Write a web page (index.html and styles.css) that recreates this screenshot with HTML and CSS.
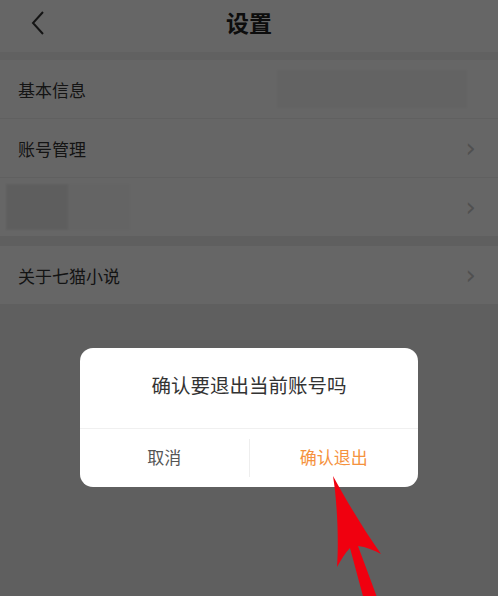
FILE: index.html
```html
<!DOCTYPE html>
<html lang="zh-CN">
<head>
    <meta charset="UTF-8">
    <meta name="viewport" content="width=device-width, initial-scale=1.0">
    <title>设置</title>
    <link rel="stylesheet" href="styles.css">
</head>
<body>
    <div class="page">
        <header class="topbar">
            <svg class="back" width="16" height="26" viewBox="0 0 16 26">
                <path d="M13 2 L3 13 L13 24" fill="none" stroke="#333" stroke-width="2"/>
            </svg>
            <h1 class="title">设置</h1>
        </header>

        <ul class="group">
            <li class="row">
                <span class="label">基本信息</span>
                <span class="blur-box wide"></span>
            </li>
            <li class="row">
                <span class="label">账号管理</span>
                <span class="arrow">&rsaquo;</span>
            </li>
            <li class="row">
                <span class="blur-box avatar"></span>
                <span class="arrow">&rsaquo;</span>
            </li>
        </ul>

        <ul class="group">
            <li class="row">
                <span class="label">关于七猫小说</span>
                <span class="arrow">&rsaquo;</span>
            </li>
        </ul>
    </div>

    <div class="mask">
        <div class="dialog">
            <p class="dialog-text">确认要退出当前账号吗</p>
            <div class="dialog-actions">
                <button class="btn cancel">取消</button>
                <button class="btn confirm">确认退出</button>
            </div>
        </div>
    </div>

    <!-- red pointer onto the confirm button -->
    <svg class="pointer" width="498" height="596" viewBox="0 0 498 596">
        <path d="M333 476 C337 500 339 540 337 567 C341 560 345 553 350 548 L364 600 L378 600 L358 546 C366 547 374 550 381 554 C364 530 346 500 333 476 Z" fill="#f0000f"/>
    </svg>
</body>
</html>
```

FILE: styles.css
```css
html, body {
    margin: 0;
    padding: 0;
}
body {
    width: 498px;
    height: 596px;
    overflow: hidden;
    position: relative;
    font-family: "Noto Sans CJK SC", "Noto Sans", sans-serif;
    background: #eeeeee;
}
ul {
    list-style: none;
    margin: 0;
    padding: 0;
}

.topbar {
    height: 52px;
    background: #fff;
    display: flex;
    align-items: center;
    justify-content: center;
    position: relative;
    border-bottom: 8px solid #f3f3f3;
}
.back {
    position: absolute;
    left: 30px;
    top: 10px;
}
.title {
    margin: 0 0 8px;
    font-size: 23px;
    font-weight: bold;
    color: #222;
}

.group {
    background: #fff;
    margin-bottom: 10px;
}
.row {
    height: 58px;
    display: flex;
    align-items: center;
    justify-content: space-between;
    padding: 0 18px;
    border-bottom: 1px solid #f1f1f1;
}
.row:last-child {
    border-bottom: none;
}
.label {
    font-size: 17px;
    color: #333;
}
.arrow {
    font-size: 26px;
    color: #c8c8c8;
    font-family: "DejaVu Sans", sans-serif;
    line-height: 1;
    margin-right: 4px;
}
.blur-box {
    display: block;
    background: #f7f7f7;
    filter: blur(1px);
}
.blur-box.wide {
    width: 190px;
    height: 38px;
    margin-right: 13px;
}
.blur-box.avatar {
    width: 62px;
    height: 46px;
    margin-left: -12px;
    background: #ececec;
    box-shadow: 62px 0 0 #fafafa;
}

.mask {
    position: absolute;
    inset: 0;
    background: rgba(0, 0, 0, 0.6);
}
.dialog {
    position: absolute;
    left: 80px;
    top: 348px;
    width: 338px;
    background: #fff;
    border-radius: 13px;
    overflow: hidden;
}
.dialog-text {
    margin: 0;
    height: 80px;
    line-height: 74px;
    text-align: center;
    font-size: 19.5px;
    color: #333;
    border-bottom: 1px solid #f0f0f0;
}
.dialog-actions {
    display: flex;
    height: 58px;
    align-items: center;
}
.btn {
    flex: 1;
    border: none;
    background: none;
    font-family: inherit;
    font-size: 17px;
    height: 38px;
    padding: 0 0 4px;
}
.cancel {
    color: #555;
    border-right: 1px solid #eeeeee;
}
.confirm {
    color: #f5923e;
}

.pointer {
    position: absolute;
    left: 0;
    top: 0;
}
```
